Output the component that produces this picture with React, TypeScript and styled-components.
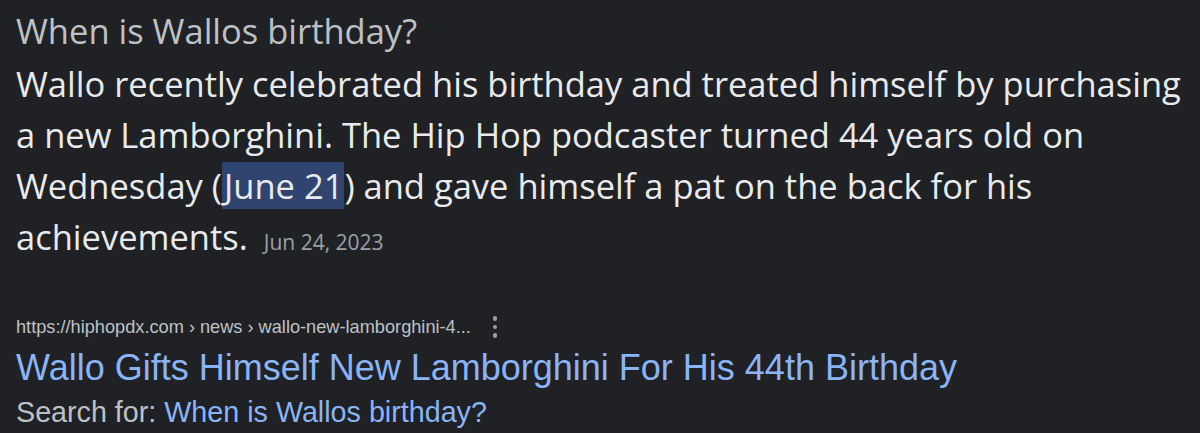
import { FC } from "react";
import styled, { createGlobalStyle } from "styled-components";

const GlobalStyle = createGlobalStyle`
  html, body {
    margin: 0;
    padding: 0;
    background: #202124;
  }
`;

const Page = styled.div`
  width: 1200px;
  height: 433px;
  overflow: hidden;
  box-sizing: border-box;
  padding: 9px 16px 0 16px;
  background: #202124;
`;

const Question = styled.div`
  font-family: "Open Sans", sans-serif;
  font-size: 34.5px;
  line-height: 44px;
  color: #bdc1c6;
`;

const Answer = styled.div`
  font-family: "Open Sans", sans-serif;
  font-size: 34.5px;
  line-height: 51px;
  color: #e8eaed;
  margin-top: 5px;
  white-space: nowrap;
`;

const Highlight = styled.span`
  background: #2f4570;
  color: #e8eaed;
  padding: 0 1px 0 2px;
`;

const DateText = styled.span`
  font-size: 21px;
  color: #9aa0a6;
  margin-left: 16px;
`;

const Result = styled.div`
  margin-top: 46px;
  font-family: "Liberation Sans", Arial, sans-serif;
`;

const UrlRow = styled.div`
  display: flex;
  align-items: center;
  gap: 22px;
  font-size: 18.2px;
  line-height: 26px;
  color: #bdc1c6;
`;

const MoreButton = styled.span`
  display: flex;
  flex-direction: column;
  gap: 4px;
  span {
    width: 4.5px;
    height: 4.5px;
    border-radius: 50%;
    background: #9aa0a6;
  }
`;

const TitleLink = styled.a`
  display: block;
  margin-top: 5px;
  font-size: 36px;
  line-height: 46px;
  color: #8ab4f8;
  text-decoration: none;
`;

const SearchFor = styled.div`
  margin-top: 3px;
  font-size: 28.7px;
  line-height: 36px;
  color: #bdc1c6;
  a {
    color: #8ab4f8;
    text-decoration: none;
  }
`;

const App: FC = () => (
  <>
    <GlobalStyle />
    <Page>
      <Question>When is Wallos birthday?</Question>
      <Answer>
        Wallo recently celebrated his birthday and treated himself by purchasing
        <br />
        a new Lamborghini. The Hip Hop podcaster turned 44 years old on
        <br />
        Wednesday (<Highlight>June 21</Highlight>) and gave himself a pat on the
        back for his
        <br />
        achievements.<DateText>Jun 24, 2023</DateText>
      </Answer>
      <Result>
        <UrlRow>
          <span>https://hiphopdx.com › news › wallo-new-lamborghini-4...</span>
          <MoreButton>
            <span />
            <span />
            <span />
          </MoreButton>
        </UrlRow>
        <TitleLink href="#">
          Wallo Gifts Himself New Lamborghini For His 44th Birthday
        </TitleLink>
        <SearchFor>
          Search for: <a href="#">When is Wallos birthday?</a>
        </SearchFor>
      </Result>
    </Page>
  </>
);

export default App;
